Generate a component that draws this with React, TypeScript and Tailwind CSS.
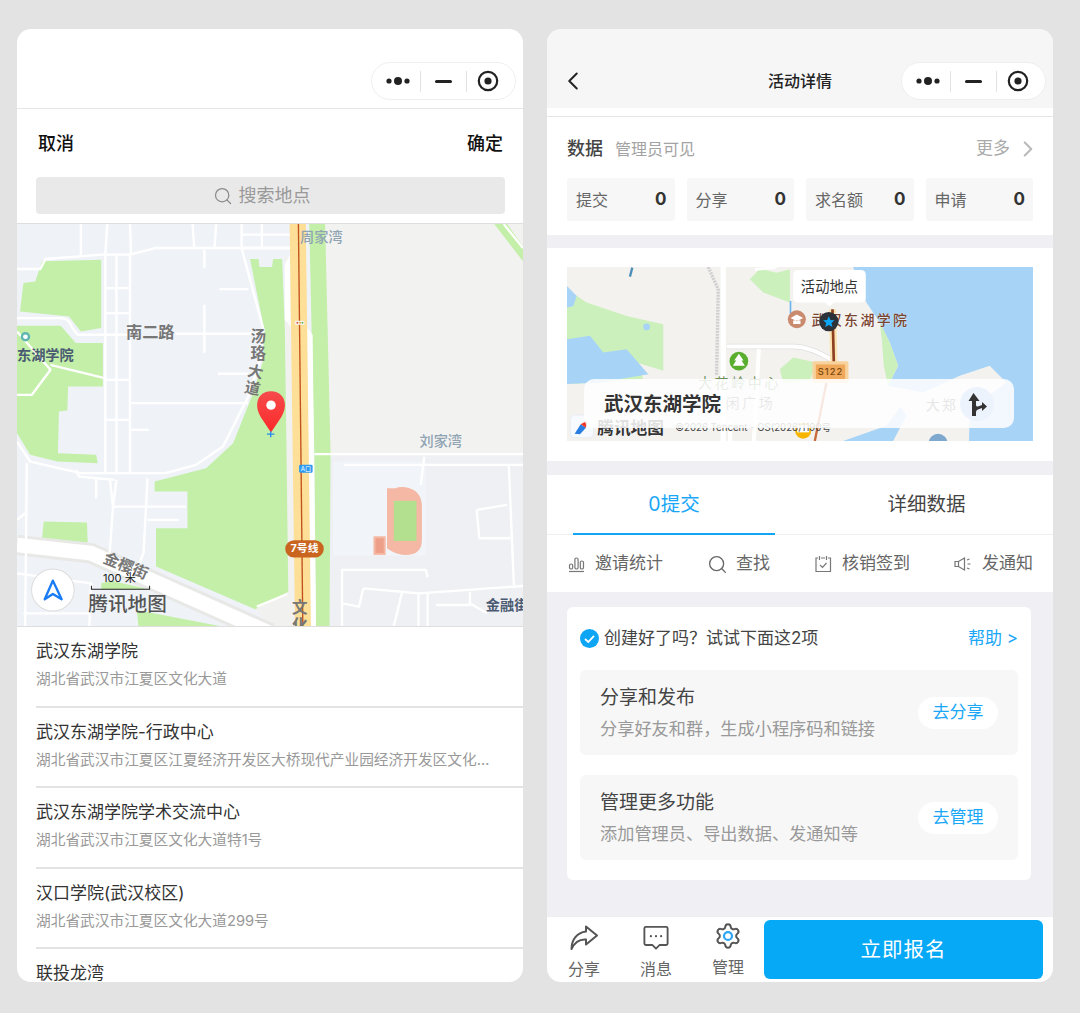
import * as React from "react";
import { Search, ChevronLeft, ChevronRight } from "lucide-react";

const places = [
  { name: "武汉东湖学院", addr: "湖北省武汉市江夏区文化大道" },
  { name: "武汉东湖学院-行政中心", addr: "湖北省武汉市江夏区江夏经济开发区大桥现代产业园经济开发区文化大道特1号楼" },
  { name: "武汉东湖学院学术交流中心", addr: "湖北省武汉市江夏区文化大道特1号" },
  { name: "汉口学院(武汉校区)", addr: "湖北省武汉市江夏区文化大道299号" },
  { name: "联投龙湾", addr: "湖北省武汉市江夏区文化大道" },
];

const stats = [
  { label: "提交", value: 0 },
  { label: "分享", value: 0 },
  { label: "求名额", value: 0 },
  { label: "申请", value: 0 },
];

const tasks = [
  { title: "分享和发布", desc: "分享好友和群，生成小程序码和链接", action: "去分享" },
  { title: "管理更多功能", desc: "添加管理员、导出数据、发通知等", action: "去管理" },
];

function Capsule() {
  return (
    <div className="flex h-[38px] w-[145px] items-center rounded-full border border-[#eeeeee] bg-white">
      <div className="flex w-[48px] justify-center pl-[4px]">
        <svg width="26" height="10" viewBox="0 0 26 10">
          <circle cx="4" cy="5" r="2.6" fill="#222" />
          <circle cx="13" cy="5" r="4" fill="#222" />
          <circle cx="22" cy="5" r="2.6" fill="#222" />
        </svg>
      </div>
      <div className="h-[21px] w-px bg-[#e2e2e2]" />
      <div className="flex w-[45px] justify-center">
        <div className="h-[3px] w-[17px] rounded-full bg-[#222]" />
      </div>
      <div className="h-[21px] w-px bg-[#e2e2e2]" />
      <div className="flex flex-1 justify-center pr-[6px]">
        <svg width="22" height="22" viewBox="0 0 22 22">
          <circle cx="11" cy="11" r="9.2" fill="none" stroke="#222" strokeWidth="2.2" />
          <circle cx="11" cy="11" r="3.6" fill="#222" />
        </svg>
      </div>
    </div>
  );
}

// zoomed-in street map behind the location picker
function PickerMap() {
  const roads = [
    "M51 148 H120 L135 118 L300 105 H385 L460 85 H860",
    "M240 13 V105 M318 13 L312 105 M385 13 L388 105 M570 13 L575 85 M640 13 L635 85 M715 13 V85 L780 330 L770 420 L735 530 L660 680 L580 735 L490 760 H240 L90 725 L51 665",
    "M715 45 H860 M775 13 V85 M715 85 H860",
    "M312 105 V760 M345 105 V760 M385 105 V760",
    "M312 205 H385 M312 280 H385 M312 480 H385 M312 600 H385",
    "M388 550 H735 M388 630 H440 M520 342 H780 M650 208 H735 M645 462 H735 M605 90 V145 M605 255 V400",
    "M51 295 H180 Q205 295 215 325 L230 345 H385 M51 335 L150 450 L95 525 H51 M150 435 L310 475",
    "M225 750 L235 770 L340 780 M285 775 V835 M325 775 L335 860 H550 M345 780 L335 860 L325 1000 M437 775 L425 1000 L400 1060 M437 900 H530",
    "M80 730 L75 1218 M51 900 L75 880 M51 1060 L270 1090 L265 1218 M70 1180 H270",
    "M760 1160 L850 1122",
    "M930 703 H1547 M1018 735 H1547 M1255 710 L1245 795 M1505 735 L1520 1095",
    "M1012 1218 V1050 H1260 L1265 1072 M1075 1105 L1062 1160 L1012 1150 M1075 1105 L1240 1120 L1547 1098 M1190 1115 L1165 1218 M1238 1120 V1218 M1265 1120 V1218 M1290 1155 H1390 V1115 M1390 1150 L1440 1180 M1410 870 L1500 855 M1410 870 L1418 955 H1510",
    "M1490 13 L1547 85",
  ];
  return (
    <svg className="block h-[402px] w-[506px]" viewBox="51 13 1496 1205" preserveAspectRatio="none">
      <defs>
        <linearGradient id="pin" x1="0" y1="0" x2="0" y2="1">
          <stop offset="0" stopColor="#f64b4b" />
          <stop offset="1" stopColor="#fb2a2a" />
        </linearGradient>
      </defs>
      <rect x="51" y="13" width="1496" height="1205" fill="#eff3f8" />
      <polygon points="960,13 1547,13 1547,700 975,700" fill="#f2f2f0" />
      <polygon points="975,700 1547,700 1547,1218 975,1218" fill="#eff0f3" />
      <rect x="985" y="725" width="275" height="282" fill="#f1f4f8" />
      <polygon points="915,13 962,13 978,700 975,1218 935,1218 930,700" fill="#c3efa8" />
      <polygon points="1462,13 1500,13 1547,80 1547,125" fill="#c3efa8" />
      <polygon points="843,110 870,110 880,1218 800,1218 755,1168 853,1115" fill="#f1f1ef" />
      <polygon
        points="740,118 765,118 768,142 805,142 808,118 835,118 843,330 848,700 853,1115 755,1168 462,1040 462,925 555,925 555,815 458,815 458,785 610,745 690,670 745,530 780,420 780,320"
        fill="#c3efa8"
      />
      <polygon points="125,125 300,120 300,325 240,335 205,290 60,275 70,190 105,185" fill="#c3efa8" />
      <polygon points="51,318 180,318 225,370 305,370 305,500 202,500 200,572 175,575 172,700 285,705 290,730 170,725 90,705 51,640" fill="#c3efa8" />
      <polygon points="130,905 258,908 260,968 125,955" fill="#c3efa8" />
      <polygon points="300,1090 330,1082 440,1108 300,1108" fill="#c3efa8" />
      <polygon points="405,1170 650,1218 410,1218" fill="#c3efa8" />
      <path d="M51 975 L270 1000 L800 1240" stroke="#e8e8e6" strokeWidth="62" fill="none" />
      <path d="M51 975 L270 1000 L800 1240" stroke="#fff" strokeWidth="44" fill="none" />
      {roads.map((d, i) => (
        <path key={i} d={d} fill="none" stroke="#fff" strokeWidth="7" strokeLinejoin="round" />
      ))}
      <polygon points="843,135 858,105 860,320 843,300" fill="#fff" />
      <polygon points="905,320 925,345 935,1218 918,1218" fill="#fff" />
      <polygon points="857,13 905,13 920,1218 873,1218" fill="#fddf98" />
      <path d="M883 13 L896 1218" stroke="#c2521c" strokeWidth="4" />
      <rect x="873" y="303" width="28" height="12" rx="3" fill="#f5f5f5" />
      <circle cx="880" cy="309" r="3" fill="#e05a4a" />
      <circle cx="888" cy="309" r="3" fill="#eeb23a" />
      <circle cx="895" cy="309" r="3" fill="#67b85a" />
      <path d="M1145 805 H1170 Q1180 800 1200 802 Q1248 810 1248 860 V960 Q1248 1005 1200 1005 Q1170 1005 1145 985 Z" fill="#f4b8a4" />
      <rect x="1165" y="843" width="67" height="120" fill="#b2e08e" />
      <rect x="1105" y="949" width="36" height="56" fill="#f4b8a4" />
      <rect x="1111" y="955" width="24" height="44" fill="#ee9f89" />
      <circle cx="76" cy="351" r="14" fill="#5fb6b0" />
      <circle cx="76" cy="351" r="7" fill="#fff" />
      <rect x="885" y="735" width="40" height="24" rx="4" fill="#2f9bf0" />
      <text x="905" y="753" fontSize="18" textAnchor="middle" fill="#fff">A口</text>
      <rect x="844" y="961" width="114" height="52" rx="26" fill="#c9651f" />
      <text x="901" y="996" fontSize="32" fontWeight="700" textAnchor="middle" fill="#fff">7号线</text>
      <g fill="#777" fontSize="46" fontWeight="700" textAnchor="middle">
        <text x="445" y="356" fontSize="48">南二路</text>
        <text x="764" y="366">汤</text>
        <text x="764" y="418">珞</text>
        <text x="756" y="472" transform="rotate(12 756 456)">大</text>
        <text x="747" y="522" transform="rotate(12 747 506)">道</text>
        <text x="372" y="1054" transform="rotate(22 372 1040)">金樱街</text>
        <text x="887" y="1180">文</text>
        <text x="887" y="1232">化</text>
      </g>
      <g fill="#8fa3b3" fontSize="42" fontWeight="500">
        <text x="888" y="66">周家湾</text>
        <text x="1241" y="678">刘家湾</text>
      </g>
      <g fill="#4a5a72" fontSize="42" fontWeight="700">
        <text x="51" y="422">东湖学院</text>
        <text x="1437" y="1170">金融街</text>
      </g>
      <path
        d="M802 514 C765 514 748 552 772 592 L802 638 L832 592 C856 552 839 514 802 514 Z"
        fill="url(#pin)"
      />
      <circle cx="802" cy="556" r="14" fill="#fff" />
      <path d="M790 643 H812 M801 634 V652" stroke="#2a8cf0" strokeWidth="4" />
      <circle cx="157" cy="1110" r="63" fill="#fff" stroke="#dddddd" strokeWidth="3" />
      <path d="M157 1082 L183 1138 L157 1122 L133 1138 Z" fill="none" stroke="#1a7cf5" strokeWidth="7" strokeLinejoin="round" />
      <text x="305" y="1085" fontSize="33" fill="#222">100 米</text>
      <path d="M271 1097 V1108 H443 V1097" fill="none" stroke="#222" strokeWidth="3" />
      <text x="262" y="1172" fontSize="58" fill="#555" fontWeight="500">腾讯地图</text>
    </svg>
  );
}

// small overview map on the event page
function EventMap() {
  return (
    <svg className="block h-[174px] w-[466px]" viewBox="21 23 1399 523" preserveAspectRatio="none">
      <rect x="21" y="23" width="1399" height="523" fill="#f3f2ef" />
      <polygon points="880,23 1420,23 1420,546 850,546 980,500 1040,420 985,380 1015,320 990,250 960,190 920,130" fill="#a7d3f7" />
      <polygon points="960,190 990,250 1015,320 985,380 972,320 966,240" fill="#cbf0bb" />
      <polygon points="985,380 1090,400 1200,350 1290,320 1340,370 1230,450 1228,546 1000,546 1040,470" fill="#f3f2ef" />
      <polygon points="21,90 80,130 200,170 310,195 310,335 230,310 250,360 120,370 21,375" fill="#cbf0bb" />
      <polygon points="21,80 50,110 40,140 21,145" fill="#a7d3f7" />
      <polygon points="21,240 90,230 130,280 200,270 265,345 120,370 21,375" fill="#a7d3f7" />
      <circle cx="260" cy="203" r="10" fill="#a7d3f7" />
      <polygon points="570,60 600,28 650,40 690,30 690,130 610,100" fill="#cbf0bb" />
      <polygon points="660,330 700,295 770,310 750,365 670,370" fill="#cbf0bb" />
      <path d="M490 23 V546" stroke="#fff" strokeWidth="16" />
      <path d="M445 23 L475 90 L470 350" stroke="#cfcfcf" strokeWidth="10" fill="none" strokeDasharray="6 3" />
      <path d="M500 262 H700 Q750 262 815 302" stroke="#dedede" strokeWidth="16" fill="none" />
      <path d="M500 262 H700 Q750 262 815 302" stroke="#fff" strokeWidth="12" fill="none" />
      <path d="M597 270 L582 546 M510 546 V490" stroke="#fff" strokeWidth="12" fill="none" />
      <path d="M585 30 L650 25" stroke="#fff" strokeWidth="8" />
      <path d="M217 25 L210 52" stroke="#4d8fb8" strokeWidth="7" />
      <path d="M692 125 V165" stroke="#6bb5ec" strokeWidth="5" />
      <path d="M818 150 L822 310" stroke="#fbe3b4" strokeWidth="22" fill="none" />
      <path d="M818 150 L822 310" stroke="#8d3f20" strokeWidth="8" fill="none" />
      <path d="M800 370 L765 546" stroke="#c96a3a" strokeWidth="7" fill="none" />
      <circle cx="537" cy="306" r="28" fill="#5aae2e" />
      <path d="M537 284 L551 304 H545 L555 320 H519 L529 304 H523 Z" fill="#fff" />
      <rect x="758" y="306" width="108" height="66" rx="5" fill="#f8d29c" />
      <rect x="768" y="316" width="88" height="44" rx="3" fill="#f0a85b" />
      <text x="812" y="349" fontSize="28" fontWeight="500" letterSpacing="3" textAnchor="middle" fill="#7a4a10">S122</text>
      <circle cx="711" cy="180" r="27" fill="#c98a6e" />
      <path d="M692 176 L711 166 L730 176 L711 186 Z M700 184 V194 H722 V184" fill="#fff" />
      <text x="755" y="198" fontSize="42" fontWeight="500" letterSpacing="7" fill="#7a4530" stroke="#fff" strokeWidth="1" paintOrder="stroke">武汉东湖学院</text>
      <circle cx="807" cy="187" r="29" fill="#2c3238" />
      <path d="M807 171 L812 182 L824 183 L815 191 L818 203 L807 197 L796 203 L799 191 L790 183 L802 182 Z" fill="#0ea5f5" />
      <path d="M794 128 H824 L809 142 Z" fill="#fff" />
      <rect x="700" y="32" width="218" height="98" rx="14" fill="#fff" />
      <text x="809" y="98" fontSize="43" textAnchor="middle" fill="#333">活动地点</text>
      <text x="414" y="388" fontSize="42" letterSpacing="8" fill="#6d8f5a">大花岭中心</text>
      <text x="497" y="448" fontSize="42" letterSpacing="8" fill="#666">闲广场</text>
      <text x="1098" y="452" fontSize="42" letterSpacing="6" fill="#555">大郑</text>
      <circle cx="730" cy="515" r="24" fill="#f7b500" />
      <rect x="712" y="498" width="36" height="22" fill="#fff" />
      <circle cx="1135" cy="552" r="28" fill="#7fa8cf" />
      <rect x="31" y="468" width="70" height="68" rx="14" fill="#f7fbff" stroke="#e3e8ee" strokeWidth="2" />
      <path d="M44 524 L62 496 L78 506 L60 526 Z" fill="#2a7de1" />
      <path d="M62 496 L80 486 L78 506 Z" fill="#ef3b2d" />
      <text x="112" y="526" fontSize="50" fontWeight="700" fill="#333" stroke="#fff" strokeWidth="1" paintOrder="stroke">腾讯地图</text>
      <text x="346" y="516" fontSize="29" fill="#444">©2026 Tencent - GS(2026)1190号</text>
    </svg>
  );
}

function BarsIcon() {
  return (
    <svg width="17" height="17" viewBox="0 0 17 17" fill="none" stroke="#777" strokeWidth="1.2">
      <rect x="1.5" y="8" width="3.2" height="5" rx="1.6" />
      <rect x="6.9" y="2" width="3.2" height="11" rx="1.6" />
      <rect x="12.3" y="5" width="3.2" height="8" rx="1.6" />
      <path d="M1 15.5 H16" />
    </svg>
  );
}

function CheckinIcon() {
  return (
    <svg width="18" height="18" viewBox="0 0 18 18" fill="none" stroke="#777" strokeWidth="1.2">
      <path d="M4 3 H2 V16.5 H16.5 V3 H14 M7 3 H11" />
      <path d="M5.5 1 V5 M12.5 1 V5" />
      <path d="M6 10 L8.5 12.5 L12.5 8" />
    </svg>
  );
}

function SpeakerIcon() {
  return (
    <svg width="18" height="18" viewBox="0 0 18 18" fill="none" stroke="#777" strokeWidth="1.2">
      <path d="M1 6.5 H4.5 L10.5 3 V15 L4.5 11.5 H1 Z" />
      <path d="M4.5 6.5 V11.5" />
      <path d="M13 5 L15.5 4 M13.5 9 H16.5 M13 13 L15.5 14" />
    </svg>
  );
}

const tools = [
  { label: "邀请统计", icon: <BarsIcon />, gap: "gap-[10px]" },
  { label: "查找", icon: <Search size={21} color="#666" strokeWidth={1.5} />, gap: "gap-[8px]" },
  { label: "核销签到", icon: <CheckinIcon />, gap: "gap-[10px]" },
  { label: "发通知", icon: <SpeakerIcon />, gap: "gap-[10px]" },
];

function LocationPicker() {
  return (
    <div className="flex h-[953px] w-[506px] flex-col overflow-hidden rounded-[14px] bg-white">
      <div className="flex h-[80px] shrink-0 items-end justify-end border-b border-[#e6e6e6] pr-[7px] pb-[8px]">
        <Capsule />
      </div>
      <div className="flex h-[68px] shrink-0 items-center justify-between pr-[20px] pl-[21px] text-[18px] font-medium text-[#111]">
        <span>取消</span>
        <span>确定</span>
      </div>
      <div className="mr-[18px] ml-[19px] flex h-[37px] shrink-0 items-center justify-center gap-[6px] rounded-[4px] bg-[#e9e9e9] pr-[18px] text-[18px] text-[#999]">
        <Search size={20} strokeWidth={1.5} color="#8a8a8a" />
        <span>搜索地点</span>
      </div>
      <div className="mt-[9px] shrink-0 border-y border-[#dedede]">
        <PickerMap />
      </div>
      <ul className="pl-[19px]">
        {places.map((place) => (
          <li key={place.name} className="h-[80.6px] shrink-0 border-b-2 border-[#e3e3e3] pt-[12px] pr-[30px]">
            <div className="text-[17px] leading-[24px] text-[#333]">{place.name}</div>
            <div className="mt-[5px] truncate text-[14.7px] leading-[22px] text-[#999]">{place.addr}</div>
          </li>
        ))}
      </ul>
    </div>
  );
}

function EventDetail() {
  return (
    <div className="flex h-[953px] w-[506px] flex-col overflow-hidden rounded-[14px] bg-[#efeff4]">
      <div className="grid h-[79px] shrink-0 grid-cols-[1fr_auto_1fr] items-end bg-[#f6f6f6] px-[14px] pb-[8px]">
        <div className="flex h-[38px] items-center">
          <ChevronLeft size={30} strokeWidth={1.6} color="#222" className="-ml-[3px]" />
        </div>
        <div className="flex h-[38px] items-center text-[16px] font-medium text-[#222]">活动详情</div>
        <div className="-mr-[7px] flex justify-end">
          <Capsule />
        </div>
      </div>

      <div className="h-[9px] shrink-0 border-b border-[#e6e6e6] bg-white" />
      <section className="h-[118px] shrink-0 bg-white px-[20px]">
        <div className="flex h-[61px] items-center pt-[2px]">
          <span className="text-[18px] font-medium text-[#444]">数据</span>
          <span className="ml-[12px] text-[16px] text-[#a3a3a3]">管理员可见</span>
          <span className="mr-[5px] ml-auto text-[17px] text-[#aaa]">更多</span>
          <ChevronRight size={26} strokeWidth={2} color="#bbb" className="mr-[-8px]" />
        </div>
        <div className="grid grid-cols-4 gap-[12px]">
          {stats.map((stat) => (
            <div key={stat.label} className="flex h-[43px] items-center justify-between rounded-[3px] bg-[#f7f7f7] px-[8px] text-[16px] text-[#666]">
              <span className="pl-px">{stat.label}</span>
              <span className="text-[17px] font-bold text-[#333]">{stat.value}</span>
            </div>
          ))}
        </div>
      </section>

      <section className="mt-[13px] h-[213px] shrink-0 bg-white px-[20px] pt-[19px]">
        <div className="relative h-[174px] overflow-hidden">
          <EventMap />
          <div className="absolute top-[112px] left-[17px] flex h-[49px] w-[430px] items-center justify-between rounded-[10px] bg-white/85 pr-[20px] pl-[20px] text-[19.5px] font-bold text-[#333]">
            <span className="pt-[2px]">武汉东湖学院</span>
            <span className="flex size-[34px] items-center justify-center rounded-full bg-[#edf3fd]">
              <svg width="20" height="24" viewBox="0 0 20 24" fill="#333">
                <path d="M6.5 1 L12.5 9 H9 V13 Q9 15 11 14.5 L15 13 V10 L20 14.5 L15 19 V16 L11 17.5 Q9 18 9 20 V24 H5 V9 H1.5 Z" />
              </svg>
            </span>
          </div>
        </div>
      </section>

      <section className="mt-[14px] shrink-0 bg-white">
        <div className="grid h-[60px] grid-cols-2 border-b border-[#eeeeee] text-[19.5px]">
          <div className="relative ml-[26px] flex w-[202px] items-center justify-center pt-[1px] text-[#1aa7f7]">
            <span>0提交</span>
            <div className="absolute right-0 -bottom-px left-0 h-[2px] bg-[#14a6f5]" />
          </div>
          <div className="flex items-center justify-center pt-[1px] text-[#444]">详细数据</div>
        </div>
        <div className="flex h-[57px] items-center justify-between pt-[1px] pr-[20px] pl-[21px] text-[17px] text-[#666]">
          {tools.map((tool) => (
            <div key={tool.label} className={`flex items-center ${tool.gap}`}>
              {tool.icon}
              <span>{tool.label}</span>
            </div>
          ))}
        </div>
      </section>

      <div className="min-h-0 flex-1 px-[20px] pt-[15px]">
        <div className="h-[273px] w-[464px] rounded-[6px] bg-white px-[13px]">
          <div className="flex h-[63px] items-center">
            <svg width="19" height="19" viewBox="0 0 19 19" className="shrink-0">
              <circle cx="9.5" cy="9.5" r="9.5" fill="#0ea5f5" />
              <path d="M5 10 L8.3 13 L14 6.8" fill="none" stroke="#fff" strokeWidth="1.8" />
            </svg>
            <span className="ml-[5px] text-[17px] text-[#444]">创建好了吗？试试下面这2项</span>
            <span className="ml-auto text-[17px] text-[#1aa7f7]">帮助 &gt;</span>
          </div>
          <div className="flex flex-col gap-[20px]">
            {tasks.map((task) => (
              <div key={task.title} className="flex h-[85px] items-center justify-between rounded-[6px] bg-[#f7f7f7] pt-[1px] pr-[20px] pl-[20px]">
                <div>
                  <div className="text-[19px] leading-[26px] text-[#444]">{task.title}</div>
                  <div className="mt-[6px] text-[17.2px] leading-[24px] text-[#999]">{task.desc}</div>
                </div>
                <button className="h-[32px] w-[80px] rounded-full bg-white text-[17px] text-[#1aa7f7]">{task.action}</button>
              </div>
            ))}
          </div>
        </div>
      </div>

      <div className="flex h-[66px] shrink-0 items-center border-t border-[#eeeeee] bg-white pl-px">
        <div className="flex w-[72px] translate-y-[2px] flex-col items-center text-[16px] leading-[20px] text-[#666]">
          <svg width="30" height="28" viewBox="0 0 30 28" fill="none" stroke="#555" strokeWidth="2" strokeLinejoin="round">
            <path d="M17 2.5 L28 11.5 L17 20.5 V15.5 C10 15 5.5 18.5 2.5 25 C2.5 15.5 8 8.5 17 7.5 Z" />
          </svg>
          <span className="mt-[7px]">分享</span>
        </div>
        <div className="flex w-[72px] translate-y-[2px] flex-col items-center text-[16px] leading-[20px] text-[#666]">
          <svg width="26" height="28" viewBox="0 0 28 28" fill="none" stroke="#555" strokeWidth="2" strokeLinejoin="round">
            <path d="M3 2 H25 Q26.5 2 26.5 3.5 V20 Q26.5 21.5 25 21.5 H18 L14 25.5 L10 21.5 H3 Q1.5 21.5 1.5 20 V3.5 Q1.5 2 3 2 Z" />
            <circle cx="8.5" cy="12" r="1.2" fill="#555" stroke="none" />
            <circle cx="14" cy="12" r="1.2" fill="#555" stroke="none" />
            <circle cx="19.5" cy="12" r="1.2" fill="#555" stroke="none" />
          </svg>
          <span className="mt-[7px]">消息</span>
        </div>
        <div className="flex w-[72px] flex-col items-center text-[16px] leading-[20px] text-[#666]">
          <svg width="28" height="28" viewBox="0 0 24 24" fill="none" stroke="#555" strokeWidth="1.7" strokeLinejoin="round">
            <path d="M9.671 4.136a2.34 2.34 0 0 1 4.659 0 2.34 2.34 0 0 0 3.319 1.915 2.34 2.34 0 0 1 2.33 4.033 2.34 2.34 0 0 0 0 3.831 2.34 2.34 0 0 1-2.33 4.033 2.34 2.34 0 0 0-3.319 1.915 2.34 2.34 0 0 1-4.659 0 2.34 2.34 0 0 0-3.32-1.915 2.34 2.34 0 0 1-2.33-4.033 2.34 2.34 0 0 0 0-3.831A2.34 2.34 0 0 1 6.35 6.051a2.34 2.34 0 0 0 3.319-1.915" />
            <circle cx="12" cy="12" r="3.4" stroke="#2ba5f5" strokeWidth="1.9" />
          </svg>
          <span className="mt-[7px]">管理</span>
        </div>
        <button className="h-[59px] w-[279px] rounded-[6px] bg-[#06a9f6] pt-[2px] text-[20.5px] tracking-[1px] text-white">立即报名</button>
      </div>
    </div>
  );
}

export default function App() {
  return (
    <div className="flex min-h-[1013px] gap-[24px] bg-[#e3e3e3] pt-[29px] pl-[17px] font-[Inter,'Noto_Sans_CJK_SC',sans-serif]">
      <LocationPicker />
      <EventDetail />
    </div>
  );
}
